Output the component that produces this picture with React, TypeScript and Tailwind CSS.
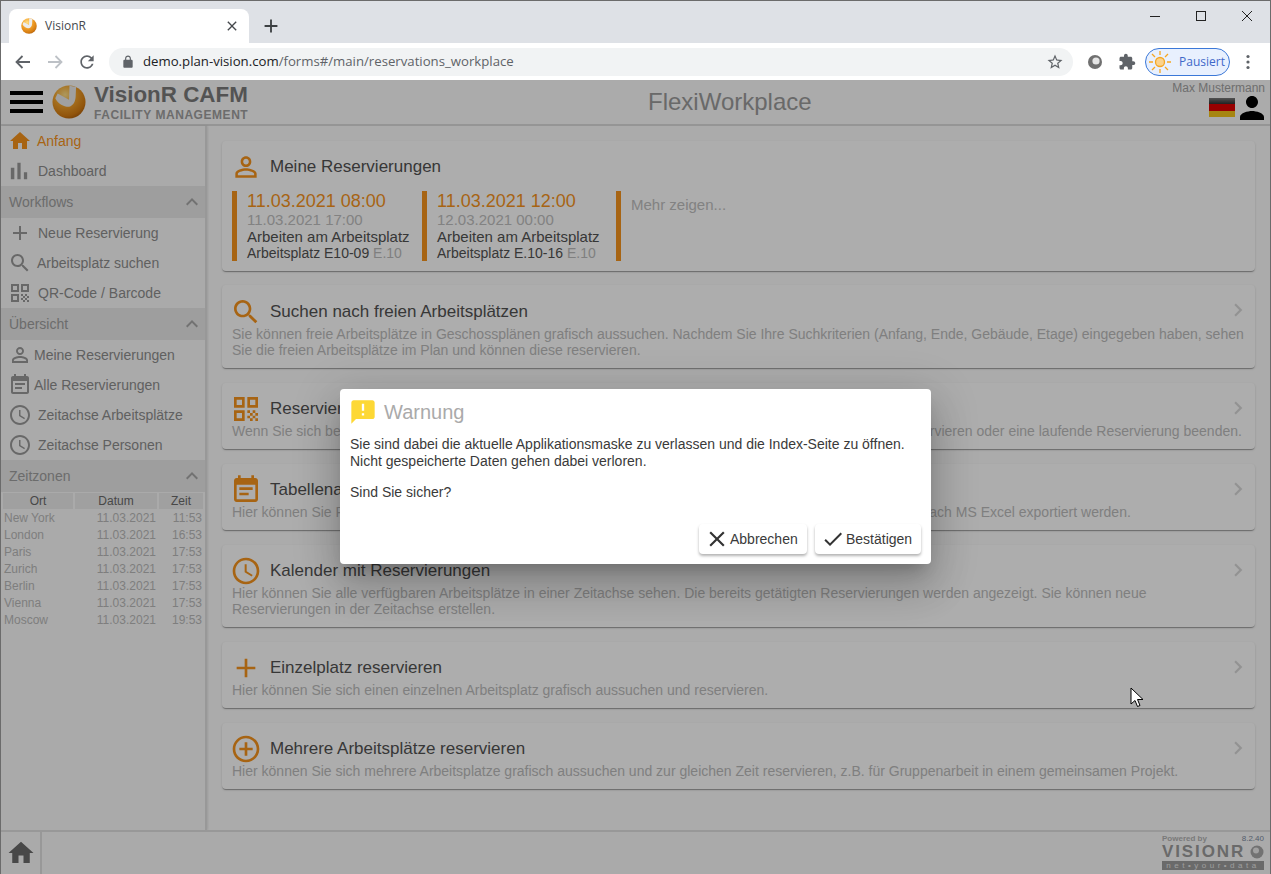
import React from "react";

const P: Record<string, string> = {
  home: "M10 20v-6h4v6h5v-8h3L12 3 2 12h3v8z",
  bars: "M5 9.2h3V19H5zM10.6 5h2.8v14h-2.8zm5.6 8H19v6h-2.8z",
  add: "M19 13h-6v6h-2v-6H5v-2h6V5h2v6h6v2z",
  search: "M15.5 14h-.79l-.28-.27C15.41 12.59 16 11.11 16 9.5 16 5.91 13.09 3 9.5 3S3 5.91 3 9.5 5.91 16 9.5 16c1.61 0 3.09-.59 4.23-1.57l.27.28v.79l5 4.99L20.49 19l-4.99-5zm-6 0C7.01 14 5 11.99 5 9.5S7.01 5 9.5 5 14 7.01 14 9.5 11.99 14 9.5 14z",
  qr: "M3 11h8V3H3v8zm2-6h4v4H5V5zM3 21h8v-8H3v8zm2-6h4v4H5v-4zM13 3v8h8V3h-8zm6 6h-4V5h4v4zM19 19h2v2h-2zM13 13h2v2h-2zM15 15h2v2h-2zM13 17h2v2h-2zM15 19h2v2h-2zM17 17h2v2h-2zM17 13h2v2h-2zM19 15h2v2h-2z",
  person: "M12 5.9c1.16 0 2.1.94 2.1 2.1s-.94 2.1-2.1 2.1S9.9 9.16 9.9 8s.94-2.1 2.1-2.1m0 9c2.97 0 6.1 1.46 6.1 2.1v1.1H5.9V17c0-.64 3.13-2.1 6.1-2.1M12 4C9.79 4 8 5.79 8 8s1.79 4 4 4 4-1.79 4-4-1.79-4-4-4zm0 9c-2.67 0-8 1.34-8 4v3h16v-3c0-2.66-5.33-4-8-4z",
  personFill: "M12 12c2.21 0 4-1.79 4-4s-1.79-4-4-4-4 1.79-4 4 1.79 4 4 4zm0 2c-2.67 0-8 1.34-8 4v2h16v-2c0-2.66-5.33-4-8-4z",
  event: "M17 10H7v2h10v-2zm2-7h-1V1h-2v2H8V1H6v2H5c-1.11 0-1.99.9-1.99 2L3 19c0 1.1.89 2 2 2h14c1.1 0 2-.9 2-2V5c0-1.1-.9-2-2-2zm0 16H5V8h14v11zm-5-5H7v2h7v-2z",
  clock: "M11.99 2C6.47 2 2 6.48 2 12s4.47 10 9.99 10C17.52 22 22 17.52 22 12S17.52 2 11.99 2zM12 20c-4.42 0-8-3.58-8-8s3.58-8 8-8 8 3.58 8 8-3.58 8-8 8zm.5-13H11v6l5.25 3.15.75-1.23-4.5-2.67z",
  less: "M12 8l-6 6 1.41 1.41L12 10.83l4.59 4.58L18 14z",
  chev: "M10 6L8.59 7.41 13.17 12l-4.58 4.59L10 18l6-6z",
  close: "M19 6.41L17.59 5 12 10.59 6.41 5 5 6.41 10.59 12 5 17.59 6.41 19 12 13.41 17.59 19 19 17.59 13.41 12z",
  check: "M9 16.17L4.83 12l-1.42 1.41L9 19 21 7l-1.41-1.41z",
  addc: "M13 7h-2v4H7v2h4v4h2v-4h4v-2h-4V7zm-1-5C6.48 2 2 6.48 2 12s4.48 10 10 10 10-4.48 10-10S17.52 2 12 2zm0 18c-4.41 0-8-3.59-8-8s3.59-8 8-8 8 3.59 8 8-3.59 8-8 8z",
  warn: "M20 2H4c-1.1 0-1.99.9-1.99 2L2 22l4-4h14c1.1 0 2-.9 2-2V4c0-1.1-.9-2-2-2zm-7 9h-2V5h2v6zm0 4h-2v-2h2v2z",
};

function I({ n, s, c }: { n: string; s: number; c: string }) {
  return (
    <svg width={s} height={s} viewBox="0 0 24 24" className={`shrink-0 ${c}`} fill="currentColor">
      <path d={P[n]} />
    </svg>
  );
}

function Logo({ s }: { s: number }) {
  return (
    <svg width={s} height={s} viewBox="0 0 36 36" className="shrink-0">
      <defs>
        <radialGradient id={`g${s}`} cx="38%" cy="28%" r="80%">
          <stop offset="0" stopColor="#ffe08a" />
          <stop offset="0.4" stopColor="#f5a62e" />
          <stop offset="0.8" stopColor="#d67d12" />
          <stop offset="1" stopColor="#a8590a" />
        </radialGradient>
      </defs>
      <circle cx="18" cy="18" r="17.5" fill={`url(#g${s})`} />
      <path d="M3.5 14 L6 9 L18 15.5 L18.5 0.8 L25.5 2.2 L25 13 C24.5 20 20 24 15.5 23 C10 22 5.5 18.5 3.5 14z" fill="#ececec" />
    </svg>
  );
}

function Row({ icon, label, gap, active, is = 24, ic = "" }: { icon: string; label: string; gap: string; active?: boolean; is?: number; ic?: string }) {
  return (
    <div className="flex h-[30px] items-center pl-[7px] text-[14px]">
      <I n={icon} s={is} c={`${ic} ${active ? "text-[#f7941d]" : "text-[#9a9a9a]"}`} />
      <span className={`${gap} ${active ? "text-[#f7941d]" : "text-[#8e8e8e]"}`}>{label}</span>
    </div>
  );
}

function Head({ label }: { label: string }) {
  return (
    <div className="flex h-[32px] items-center justify-between bg-[#e9e9e9] pl-[8px] pr-[1px] text-[14px] text-[#a0a0a0]">
      <span>{label}</span>
      <I n="less" s={24} c="text-[#a8a8a8]" />
    </div>
  );
}

const cardClass = "relative rounded-[4px] bg-white pl-[10px] pr-[10px] shadow-[0_2px_1px_-1px_rgba(0,0,0,.2),0_1px_1px_0_rgba(0,0,0,.14),0_1px_3px_0_rgba(0,0,0,.12)]";

function Card({ icon, title, h, pt = "pt-[10px]", children }: { icon: string; title: string; h: string; pt?: string; children: React.ReactNode }) {
  return (
    <div className={`${cardClass} ${pt} ${h}`}>
      <div className="-mb-[2px] flex h-[32px] items-center">
        <I n={icon} s={32} c="-ml-[2px] text-[#f7941d]" />
        <span className="ml-[8px] text-[17px] text-[#525252]">{title}</span>
      </div>
      <div className="text-[14px] leading-[16px] text-[#bcbcbc]">{children}</div>
      <I n="chev" s={26} c="absolute right-[4px] top-[12px] text-[#d8d8d8]" />
    </div>
  );
}

function Res({ a, b, loc, w }: { a: string; b: string; loc: string; w: string }) {
  return (
    <div className={`flex h-[70px] ${w} border-l-[5px] border-[#f7941d] pl-[10px]`}>
      <div>
        <div className="text-[18px] leading-[20px] text-[#f7941d]">{a}</div>
        <div className="text-[15px] leading-[18px] text-[#c0c0c0]">{b}</div>
        <div className="text-[15px] leading-[16px] text-[#525252]">Arbeiten am Arbeitsplatz</div>
        <div className="text-[14px] leading-[17px] text-[#525252]">
          {loc} <span className="text-[#bcbcbc]">E.10</span>
        </div>
      </div>
    </div>
  );
}

const zones = [
  ["New York", "11:53"],
  ["London", "16:53"],
  ["Paris", "17:53"],
  ["Zurich", "17:53"],
  ["Berlin", "17:53"],
  ["Vienna", "17:53"],
  ["Moscow", "19:53"],
];

export default function App() {
  return (
    <div className="relative flex h-[874px] w-[1271px] flex-col overflow-hidden border-x border-t border-[#6b6b6b] bg-white font-['Liberation_Sans',Arial,sans-serif]">
      {/* tab strip */}
      <div className="flex h-[42px] shrink-0 items-end bg-[#dee1e6] pl-[8px]">
        <div className="flex h-[34px] w-[240px] items-center rounded-t-[8px] bg-white pl-[12px] pr-[9px]">
          <Logo s={16} />
          <span className="ml-[8px] flex-1 font-['Open_Sans',sans-serif] text-[12px] text-[#45494e]">VisionR</span>
          <I n="close" s={16} c="text-[#45484c]" />
        </div>
        <div className="ml-[10px] flex h-[34px] w-[24px] items-center justify-center">
          <I n="add" s={22} c="text-[#3c4043]" />
        </div>
        <div className="mb-[19px] ml-auto flex items-center gap-[30px] pr-[15px]">
          <svg width="16" height="16" viewBox="0 0 16 16" fill="none" stroke="#222" strokeWidth="1"><path d="M3 8.5h10" /></svg>
          <svg width="16" height="16" viewBox="0 0 16 16" fill="none" stroke="#222" strokeWidth="1"><rect x="3.5" y="3.5" width="9" height="9" /></svg>
          <svg width="16" height="16" viewBox="0 0 16 16" fill="none" stroke="#222" strokeWidth="1"><path d="M3 3l10 10M13 3L3 13" /></svg>
        </div>
      </div>
      {/* toolbar */}
      <div className="flex h-[37px] shrink-0 items-center bg-white pl-[12px] pr-[9px]">
        <svg width="20" height="20" viewBox="0 0 20 20" fill="none" stroke="#5f6368" strokeWidth="1.8"><path d="M17 10H4M9.5 4L3.5 10l6 6" /></svg>
        <svg className="ml-[12px]" width="20" height="20" viewBox="0 0 20 20" fill="none" stroke="#bdc1c6" strokeWidth="1.8"><path d="M3 10h13M10.5 4l6 6-6 6" /></svg>
        <svg className="ml-[12px]" width="20" height="20" viewBox="0 0 24 24" fill="#5f6368"><path d="M17.65 6.35C16.2 4.9 14.21 4 12 4c-4.42 0-7.99 3.58-7.99 8s3.57 8 7.99 8c3.73 0 6.84-2.55 7.73-6h-2.08c-.82 2.33-3.04 4-5.65 4-3.31 0-6-2.69-6-6s2.69-6 6-6c1.66 0 3.14.69 4.22 1.78L13 11h7V4l-2.35 2.35z" /></svg>
        <div className="ml-[12px] flex h-[28px] w-[964px] items-center rounded-full bg-[#f1f3f4] pl-[12px] pr-[9px]">
          <svg width="14" height="14" viewBox="0 0 24 24" fill="#5f6368"><path d="M18 8h-1V6c0-2.76-2.24-5-5-5S7 3.24 7 6v2H6c-1.1 0-2 .9-2 2v10c0 1.1.9 2 2 2h12c1.1 0 2-.9 2-2V10c0-1.1-.9-2-2-2zM9 6c0-1.66 1.34-3 3-3s3 1.34 3 3v2H9V6z" /></svg>
          <span className="ml-[8px] flex-1 font-['Open_Sans',sans-serif] text-[13.2px] text-[#202124]">
            demo.plan-vision.com<span className="text-[#5f6368]">/forms#/main/reservations_workplace</span>
          </span>
          <svg width="18" height="18" viewBox="0 0 24 24" fill="#5f6368"><path d="M22 9.24l-7.19-.62L12 2 9.19 8.63 2 9.24l5.46 4.73L5.82 21 12 17.27 18.18 21l-1.63-7.03L22 9.24zM12 15.4l-3.76 2.27 1-4.28-3.32-2.88 4.38-.38L12 6.1l1.71 4.04 4.38.38-3.32 2.88 1 4.28L12 15.4z" /></svg>
        </div>
        <svg className="ml-[14px]" width="16" height="16" viewBox="0 0 16 16"><circle cx="8" cy="8" r="7" fill="#707070" /><circle cx="9" cy="7" r="3.6" fill="#e6e6e6" /></svg>
        <svg className="ml-[15px]" width="18" height="18" viewBox="0 0 24 24" fill="#5f6368"><path d="M20.5 11H19V7c0-1.1-.9-2-2-2h-4V3.5C13 2.12 11.88 1 10.5 1S8 2.12 8 3.5V5H4c-1.1 0-1.99.9-1.99 2v3.8H3.5c1.49 0 2.7 1.21 2.7 2.7s-1.21 2.7-2.7 2.7H2V20c0 1.1.9 2 2 2h3.8v-1.5c0-1.49 1.21-2.7 2.7-2.7 1.49 0 2.7 1.21 2.7 2.7V22H17c1.1 0 2-.9 2-2v-4h1.5c1.38 0 2.5-1.12 2.5-2.5S21.88 11 20.5 11z" /></svg>
        <div className="ml-[9px] flex h-[28px] w-[85px] items-center rounded-full border border-[#3b78d8] bg-[#e8f0fe] pl-[2px]">
          <svg width="24" height="24" viewBox="0 0 24 24" fill="none" stroke="#f5a623" strokeWidth="1.3">
            <circle cx="12" cy="12" r="4.5" fill="#fbd38d" />
            <path d="M12 1v4M12 19v4M1 12h4M19 12h4M4 4l3 3M17 17l3 3M20 4l-3 3M7 17l-3 3" />
          </svg>
          <span className="ml-[7px] font-['Open_Sans',sans-serif] text-[12px] text-[#3f68c9]">Pausiert</span>
        </div>
        <svg className="ml-[15px]" width="6" height="16" viewBox="0 0 6 16" fill="#5f6368"><circle cx="3" cy="2.5" r="1.6" /><circle cx="3" cy="8" r="1.6" /><circle cx="3" cy="13.5" r="1.6" /></svg>
      </div>

      {/* app */}
      <div className="relative flex min-h-0 flex-1 flex-col bg-[#fdfdfd]">
        <header className="flex h-[46px] shrink-0 items-center border-b-2 border-[#dcdcdc] bg-[#fcfcfc] pl-[9px] pr-[5px]">
          <div className="flex h-[22px] w-[33px] flex-col justify-between">
            <div className="h-[4px] bg-black" />
            <div className="h-[4px] bg-black" />
            <div className="h-[4px] bg-black" />
          </div>
          <div className="ml-[9px]"><Logo s={34} /></div>
          <div className="ml-[8px] w-[160px] whitespace-nowrap">
            <div className="-mt-[1px] text-[22.4px] font-bold leading-[26px] text-[#7b7b7b]">VisionR CAFM</div>
            <div className="text-[12px] font-bold leading-[14px] tracking-[0.55px] text-[#a0a0a0]">FACILITY MANAGEMENT</div>
          </div>
          <div className="flex-1 pl-[394px] text-[24px] text-[#9b9b9b]">FlexiWorkplace</div>
          <div className="flex flex-col items-end self-start pt-[2px]">
            <span className="text-[12px] leading-[13px] text-[#a3a3a3]">Max Mustermann</span>
            <div className="mt-[3px] flex items-center">
              <div className="flex h-[19px] w-[26px] flex-col">
                <div className="flex-1 bg-gradient-to-b from-[#7a7a7a] to-[#333]" />
                <div className="flex-1 bg-[#e00000]" />
                <div className="flex-1 bg-[#f5c518]" />
              </div>
              <I n="personFill" s={36} c="text-black -ml-[1px] -mr-[5px] -my-[9px]" />
            </div>
          </div>
        </header>

        <div className="flex min-h-0 flex-1">
          <aside className="w-[206px] shrink-0 border-r-2 border-[#e0e0e0] bg-[#fbfbfb] shadow-[1px_0_2px_rgba(0,0,0,.1)]">
            <Row icon="home" label="Anfang" gap="ml-[5px]" active />
            <Row icon="bars" label="Dashboard" gap="ml-[5px]" is={28} ic="-ml-[3px]" />
            <Head label="Workflows" />
            <Row icon="add" label="Neue Reservierung" gap="ml-[6px]" />
            <Row icon="search" label="Arbeitsplatz suchen" gap="ml-[5px]" />
            <Row icon="qr" label="QR-Code / Barcode" gap="ml-[6px]" />
            <Head label="Übersicht" />
            <Row icon="person" label="Meine Reservierungen" gap="ml-[2px]" />
            <Row icon="event" label="Alle Reservierungen" gap="ml-[2px]" />
            <Row icon="clock" label="Zeitachse Arbeitsplätze" gap="ml-[6px]" />
            <Row icon="clock" label="Zeitachse Personen" gap="ml-[6px]" />
            <Head label="Zeitzonen" />
            <table className="mt-[1px] w-[204px] border-separate border-spacing-x-[2px] border-spacing-y-0 text-[12px]">
              <thead>
                <tr className="text-center font-normal text-[#6a6a6a]">
                  <th className="h-[16px] w-[70px] bg-[#ececec] font-normal leading-[16px]">Ort</th>
                  <th className="w-[82px] bg-[#ececec] font-normal leading-[16px]">Datum</th>
                  <th className="bg-[#ececec] font-normal leading-[16px]">Zeit</th>
                </tr>
              </thead>
              <tbody className="text-[#bababa]">
                {zones.map(([c, t]) => (
                  <tr key={c} className="h-[17px]">
                    <td className="pb-0 pl-[1px] pr-0 pt-[2px] leading-[15px]">{c}</td>
                    <td className="pb-0 pl-0 pr-[1px] pt-[2px] text-right leading-[15px]">11.03.2021</td>
                    <td className="pb-0 pl-0 pr-[1px] pt-[2px] text-right leading-[15px]">{t}</td>
                  </tr>
                ))}
              </tbody>
            </table>
          </aside>

          <main className="flex flex-1 flex-col gap-[15px] pl-[15px] pr-[15px] pt-[15px]">
            <div className={`${cardClass} -mb-px h-[130px] pt-[10px]`}>
              <div className="flex h-[32px] items-center">
                <I n="person" s={32} c="-ml-[2px] text-[#f7941d]" />
                <span className="ml-[8px] text-[17px] text-[#525252]">Meine Reservierungen</span>
              </div>
              <div className="mt-[8px] flex">
                <Res a="11.03.2021 08:00" b="11.03.2021 17:00" loc="Arbeitsplatz E10-09" w="w-[190px]" />
                <Res a="11.03.2021 12:00" b="12.03.2021 00:00" loc="Arbeitsplatz E.10-16" w="w-[194px]" />
                <div className="h-[70px] border-l-[5px] border-[#f7941d] pl-[10px] pt-[3px] text-[15px] text-[#c0c0c0]">Mehr zeigen...</div>
              </div>
            </div>
            <Card icon="search" title="Suchen nach freien Arbeitsplätzen" h="h-[83px]" pt="pt-[11px]">
              Sie können freie Arbeitsplätze in Geschossplänen grafisch aussuchen. Nachdem Sie Ihre Suchkriterien (Anfang, Ende, Gebäude, Etage) eingegeben haben, sehen Sie die freien Arbeitsplätze im Plan und können diese reservieren.
            </Card>
            <Card icon="qr" title="Reservieren mit QR-Code" h="h-[66px]">
              Wenn Sie sich bereits vor Ort befinden können Sie den QR-Code im Arbeitsplatz scannen und diesen sofort reservieren oder eine laufende Reservierung beenden.
            </Card>
            <Card icon="event" title="Tabellenansicht" h="h-[66px]">
              Hier können Sie Reservierungen in tabellarischer Form ansehen und filtern. Die Daten können bei Bedarf auch nach MS Excel exportiert werden.
            </Card>
            <Card icon="clock" title="Kalender mit Reservierungen" h="h-[82px]">
              Hier können Sie alle verfügbaren Arbeitsplätze in einer Zeitachse sehen. Die bereits getätigten Reservierungen werden angezeigt. Sie können neue Reservierungen in der Zeitachse erstellen.
            </Card>
            <Card icon="add" title="Einzelplatz reservieren" h="h-[66px]">
              Hier können Sie sich einen einzelnen Arbeitsplatz grafisch aussuchen und reservieren.
            </Card>
            <Card icon="addc" title="Mehrere Arbeitsplätze reservieren" h="h-[66px]">
              Hier können Sie sich mehrere Arbeitsplatze grafisch aussuchen und zur gleichen Zeit reservieren, z.B. für Gruppenarbeit in einem gemeinsamen Projekt.
            </Card>
          </main>
        </div>

        <footer className="flex h-[44px] shrink-0 items-stretch border-t-2 border-[#e0e0e0] bg-[#fbfbfb]">
          <div className="flex w-[41px] items-center justify-center border-r-2 border-[#e0e0e0]">
            <I n="home" s={30} c="text-[#6a6a6a]" />
          </div>
          <div className="ml-auto mr-[6px] flex w-[102px] flex-col pt-[3px] leading-none">
            <div className="flex justify-between text-[8px] font-bold">
              <span className="text-[#b4b4b4]">Powered by</span>
              <span className="font-normal text-[#7c8aa0]">8.2.40</span>
            </div>
            <div className="flex items-center justify-between text-[17px] font-bold leading-[17px] tracking-[1.9px] text-[#9c9c9c]">
              VISIONR
              <svg width="14" height="14" viewBox="0 0 14 14"><circle cx="7" cy="7" r="6.5" fill="#a8a8a8" /><circle cx="6" cy="5.5" r="3" fill="#ececec" /></svg>
            </div>
            <div className="mt-[1px] bg-[#9c9c9c] text-center text-[8px] leading-[9px] tracking-[3.5px] text-[#e8e8e8]">net•your•data</div>
          </div>
        </footer>

        {/* backdrop */}
        <div className="absolute inset-0 bg-black/[.32]" />
        {/* dialog */}
        <div className="absolute left-[339px] top-[309px] h-[175px] w-[591px] rounded-[4px] bg-white pl-[10px] pr-[10px] pt-[10px] shadow-[0_11px_15px_-7px_rgba(0,0,0,.2),0_24px_38px_3px_rgba(0,0,0,.14),0_9px_46px_8px_rgba(0,0,0,.12)]">
          <div className="flex h-[26px] items-center">
            <I n="warn" s={28} c="-ml-[1px] text-[#fdd835]" />
            <span className="ml-[7px] text-[20px] text-[#aaaaaa]">Warnung</span>
          </div>
          <div className="mt-[11px] text-[14px] leading-[16.5px] text-[#3a3a3a]">
            <p>Sie sind dabei die aktuelle Applikationsmaske zu verlassen und die Index-Seite zu öffnen.</p>
            <p>Nicht gespeicherte Daten gehen dabei verloren.</p>
            <p className="mt-[15px]">Sind Sie sicher?</p>
          </div>
          <div className="absolute bottom-[10px] right-[10px] flex gap-[8px]">
            <button className="flex h-[30px] w-[108px] items-center rounded-[4px] bg-white pl-[5px] text-[14px] text-[#3a3a3a] shadow-[0_2px_3px_rgba(0,0,0,.3)]">
              <I n="close" s={26} c="text-[#333]" />
              <span>Abbrechen</span>
            </button>
            <button className="flex h-[30px] w-[106px] items-center rounded-[4px] bg-white pl-[6px] text-[14px] text-[#3a3a3a] shadow-[0_2px_3px_rgba(0,0,0,.3)]">
              <I n="check" s={24} c="text-[#333]" />
              <span className="ml-[1px]">Bestätigen</span>
            </button>
          </div>
        </div>
        {/* mouse pointer */}
        <svg className="absolute left-[1129px] top-[607px]" width="14" height="21" viewBox="0 0 14 21">
          <path d="M1 1v16l4-3.5 2.5 6 2.5-1-2.5-6H13z" fill="#fff" stroke="#000" strokeWidth="1" />
        </svg>
      </div>
    </div>
  );
}
